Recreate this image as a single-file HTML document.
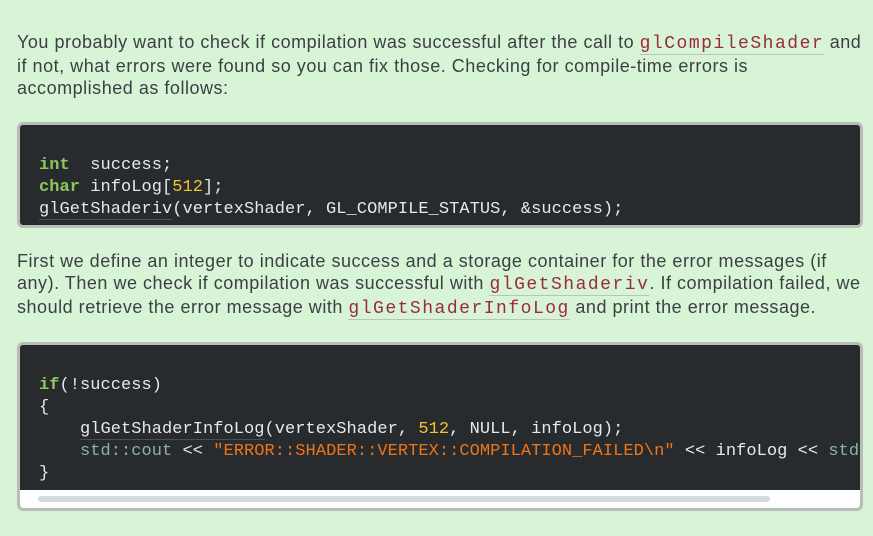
<!DOCTYPE html>
<html><head><style>
body{margin:0;width:873px;height:536px;background:#d7f4d7;overflow:hidden;position:relative;font-family:"Liberation Sans",sans-serif;}
.p{position:absolute;left:17px;font-size:18px;letter-spacing:0.52px;line-height:22px;color:#3c4043;white-space:nowrap;}
.ic{font-family:"Liberation Mono",monospace;color:#9b2a3a;font-size:18px;letter-spacing:1.5px;border-bottom:1px solid #b8c4b8;}
.blk{position:absolute;left:17px;width:840px;border:3px solid #b9bcb9;border-radius:6px;background:#282b2e;overflow:hidden;}
.code{position:absolute;left:19px;font-family:"Liberation Mono",monospace;font-size:17px;letter-spacing:0.05px;line-height:22px;color:#e6e9ec;white-space:pre;}
.k{color:#8fc659;font-weight:bold}
.n{color:#f2c230}
.s{color:#ee7418}
.t{color:#8ab3a8}
.u{border-bottom:1px solid #4a4f55}
</style></head><body>
<div class="p" style="top:31px">You probably want to check if compilation was successful after the call to <span class="ic">glCompileShader</span> and<br>if not, what errors were found so you can fix those. Checking for compile-time errors is<br>accomplished as follows:</div>
<div class="blk" style="top:122px;height:100px">
<div class="code" style="top:30px"><span class="k">int</span>  success;
<span class="k">char</span> infoLog[<span class="n">512</span>];
<span class="u">glGetShaderiv</span>(vertexShader, GL_COMPILE_STATUS, &amp;success);</div>
</div>
<div class="p" style="top:250px">First we define an integer to indicate success and a storage container for the error messages (if<br>any). Then we check if compilation was successful with <span class="ic">glGetShaderiv</span>. If compilation failed, we<br>should retrieve the error message with <span class="ic">glGetShaderInfoLog</span> and print the error message.</div>
<div class="blk" style="top:342px;height:163px">
<div class="code" style="top:30px"><span class="k">if</span>(!success)
{
    <span class="u">glGetShaderInfoLog</span>(vertexShader, <span class="n">512</span>, NULL, infoLog);
    <span class="t">std::cout</span> &lt;&lt; <span class="s">"ERROR::SHADER::VERTEX::COMPILATION_FAILED\n"</span> &lt;&lt; infoLog &lt;&lt; <span class="t">std::endl;</span></div>
<div style="position:absolute;left:0;top:145px;width:100%;height:20px;background:#fff"></div>
<div style="position:absolute;left:18px;top:151px;width:732px;height:6px;border-radius:3px;background:#d2dae2"></div>
<div class="code" style="top:118px">}</div>
</div>
</body></html>
